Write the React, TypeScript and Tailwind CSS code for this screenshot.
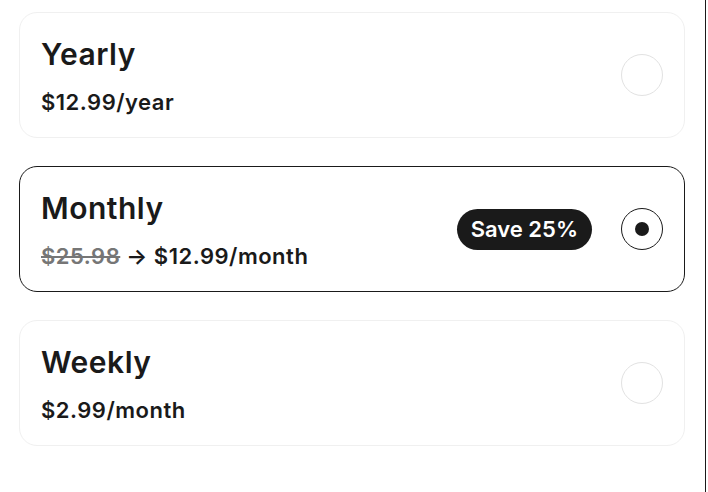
import React from "react";

type Plan = {
  name: string;
  price: React.ReactNode;
  selected?: boolean;
  badge?: string;
};

function Radio({ selected }: { selected?: boolean }) {
  return (
    <div
      className={
        "w-[42px] h-[42px] rounded-full flex items-center justify-center shrink-0 " +
        (selected ? "border border-[#1a1a1a]" : "border border-[#e2e2e2]")
      }
    >
      {selected && <div className="w-[14px] h-[14px] rounded-full bg-[#1a1a1a]" />}
    </div>
  );
}

function Card({ plan }: { plan: Plan }) {
  return (
    <div
      className={
        "h-[126px] rounded-[18px] border flex items-center pl-[21px] pr-[21px] " +
        (plan.selected ? "border-[#1a1a1a]" : "border-[#f0f0f0]")
      }
    >
      <div className="flex flex-col flex-1 pt-[2px]">
        <div className="text-[30px] leading-[36px] font-semibold text-[#1a1a1a] tracking-[0.5px]">
          {plan.name}
        </div>
        <div className="mt-[16px] text-[22px] leading-[28px] font-semibold text-[#1a1a1a] tracking-[0.5px]">
          {plan.price}
        </div>
      </div>
      {plan.badge && (
        <div className="mr-[29px] h-[41px] px-[14px] rounded-full bg-[#1a1a1a] text-white text-[22px] font-semibold flex items-center">
          {plan.badge}
        </div>
      )}
      <Radio selected={plan.selected} />
    </div>
  );
}

export default function App() {
  const plans: Plan[] = [
    { name: "Yearly", price: "$12.99/year" },
    {
      name: "Monthly",
      selected: true,
      badge: "Save 25%",
      price: (
        <span>
          <span className="line-through text-[#767676]">$25.98</span>
          <span> → $12.99/month</span>
        </span>
      ),
    },
    { name: "Weekly", price: "$2.99/month" },
  ];
  return (
    <div
      className="w-[706px] h-[492px] bg-white border-r border-[#1a1a1a]"
      style={{ fontFamily: "Inter, 'Liberation Sans', sans-serif" }}
    >
      <div className="flex flex-col gap-[28px] pt-[12px] pl-[19px] w-[685px]">
        {plans.map((p) => (
          <Card key={p.name} plan={p} />
        ))}
      </div>
    </div>
  );
}
